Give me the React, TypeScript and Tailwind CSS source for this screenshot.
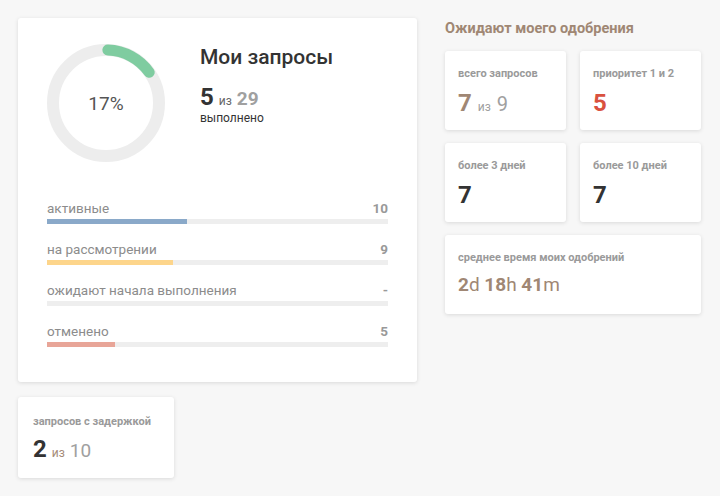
import React from "react";

interface Bar {
  label: string;
  value: string;
  pct: number;
  color: string;
}

const bars: Bar[] = [
  { label: "активные", value: "10", pct: 41, color: "bg-[#8aa9c9]" },
  { label: "на рассмотрении", value: "9", pct: 37, color: "bg-[#fdd58b]" },
  { label: "ожидают начала выполнения", value: "-", pct: 0, color: "bg-[#eeeeee]" },
  { label: "отменено", value: "5", pct: 20, color: "bg-[#e8a598]" },
];

function Donut({ pct }: { pct: number }) {
  const r = 53;
  const c = 2 * Math.PI * r;
  return (
    <div className="relative w-[118px] h-[118px] shrink-0">
      <svg width="118" height="118" viewBox="0 0 118 118">
        <circle cx="59" cy="59" r={r} fill="none" stroke="#ededed" strokeWidth="12" />
        <circle
          cx="59"
          cy="59"
          r={r}
          fill="none"
          stroke="#7fcca0"
          strokeWidth="11"
          strokeLinecap="round"
          strokeDasharray={`${(c * pct) / 100 - 8} ${c}`}
          transform="rotate(-88 59 59)"
        />
      </svg>
      <div className="absolute inset-0 flex items-center justify-center text-[19px] text-[#555] pt-[2px]">
        {pct}%
      </div>
    </div>
  );
}

function Card({ className = "", children }: { className?: string; children: React.ReactNode }) {
  return (
    <div className={`bg-white rounded-[3px] shadow-[0_1px_4px_rgba(0,0,0,0.12)] ${className}`}>
      {children}
    </div>
  );
}

export default function App() {
  return (
    <div className="w-[720px] h-[496px] bg-[#f7f7f7] font-['Roboto',sans-serif] flex gap-[28px] p-[18px] overflow-hidden">
      {/* Left column */}
      <div className="flex flex-col gap-[15px] w-[399px]">
        <Card className="h-[365px] px-[29px] pt-[26px]">
          <div className="flex gap-[35px]">
            <Donut pct={17} />
            <div className="pt-0">
              <h2 className="text-[21px] font-medium text-[#333] leading-[26px]">Мои запросы</h2>
              <div className="mt-[15px] flex items-baseline gap-[5px] leading-none">
                <span className="text-[24px] font-bold text-[#333]">5</span>
                <span className="text-[12px] text-[#666]">из</span>
                <span className="text-[19px] font-bold text-[#a0a0a0]">29</span>
              </div>
              <div className="mt-[2px] text-[12px] text-[#333] leading-[14px]">выполнено</div>
            </div>
          </div>

          <div className="mt-[38px] flex flex-col gap-[17px]">
            {bars.map((b) => (
              <div key={b.label}>
                <div className="flex justify-between items-end leading-[16px]">
                  <span className="text-[13.5px] text-[#8c8c8c]">{b.label}</span>
                  <span className="text-[13.5px] font-bold text-[#999]">{b.value}</span>
                </div>
                <div className="mt-[3px] h-[5px] bg-[#eeeeee]">
                  <div className={`h-full ${b.color}`} style={{ width: `${b.pct}%` }} />
                </div>
              </div>
            ))}
          </div>
        </Card>

        <Card className="w-[156px] h-[81px] px-[15px] pt-[18px]">
          <div className="text-[11px] font-bold text-[#9a9a9a] leading-[14px]">запросов с задержкой</div>
          <div className="mt-[8px] flex items-baseline gap-[5px] leading-none">
            <span className="text-[24px] font-bold text-[#333]">2</span>
            <span className="text-[12px] text-[#a58b78]">из</span>
            <span className="text-[19px] text-[#a0a0a0]">10</span>
          </div>
        </Card>
      </div>

      {/* Right column */}
      <div className="w-[256px] flex flex-col">
        <h3 className="text-[14.5px] font-bold text-[#a08774] leading-[18px] mt-[2px]">
          Ожидают моего одобрения
        </h3>
        <div className="mt-[13px] grid grid-cols-2 gap-x-[14px] gap-y-[13px]">
          <Card className="h-[79px] px-[13px] pt-[16px]">
            <div className="text-[11px] font-bold text-[#9a9a9a] leading-[14px]">всего запросов</div>
            <div className="mt-[10px] flex items-baseline gap-[6px] leading-none">
              <span className="text-[24px] font-bold text-[#a08774]">7</span>
              <span className="text-[12px] text-[#a0a0a0]">из</span>
              <span className="text-[20px] text-[#a0a0a0]">9</span>
            </div>
          </Card>
          <Card className="h-[79px] px-[13px] pt-[16px]">
            <div className="text-[11px] font-bold text-[#9a9a9a] leading-[14px]">приоритет 1 и 2</div>
            <div className="mt-[10px] leading-none">
              <span className="text-[24px] font-bold text-[#d9513f]">5</span>
            </div>
          </Card>
          <Card className="h-[79px] px-[13px] pt-[16px]">
            <div className="text-[11px] font-bold text-[#9a9a9a] leading-[14px]">более 3 дней</div>
            <div className="mt-[10px] leading-none">
              <span className="text-[24px] font-bold text-[#333]">7</span>
            </div>
          </Card>
          <Card className="h-[79px] px-[13px] pt-[16px]">
            <div className="text-[11px] font-bold text-[#9a9a9a] leading-[14px]">более 10 дней</div>
            <div className="mt-[10px] leading-none">
              <span className="text-[24px] font-bold text-[#333]">7</span>
            </div>
          </Card>
          <Card className="col-span-2 h-[79px] px-[13px] pt-[16px]">
            <div className="text-[11px] font-bold text-[#9a9a9a] leading-[14px]">среднее время моих одобрений</div>
            <div className="mt-[10px] leading-none text-[19px] text-[#a08774]">
              <span className="font-bold">2</span>d <span className="font-bold">18</span>h{" "}
              <span className="font-bold">41</span>m
            </div>
          </Card>
        </div>
      </div>
    </div>
  );
}
